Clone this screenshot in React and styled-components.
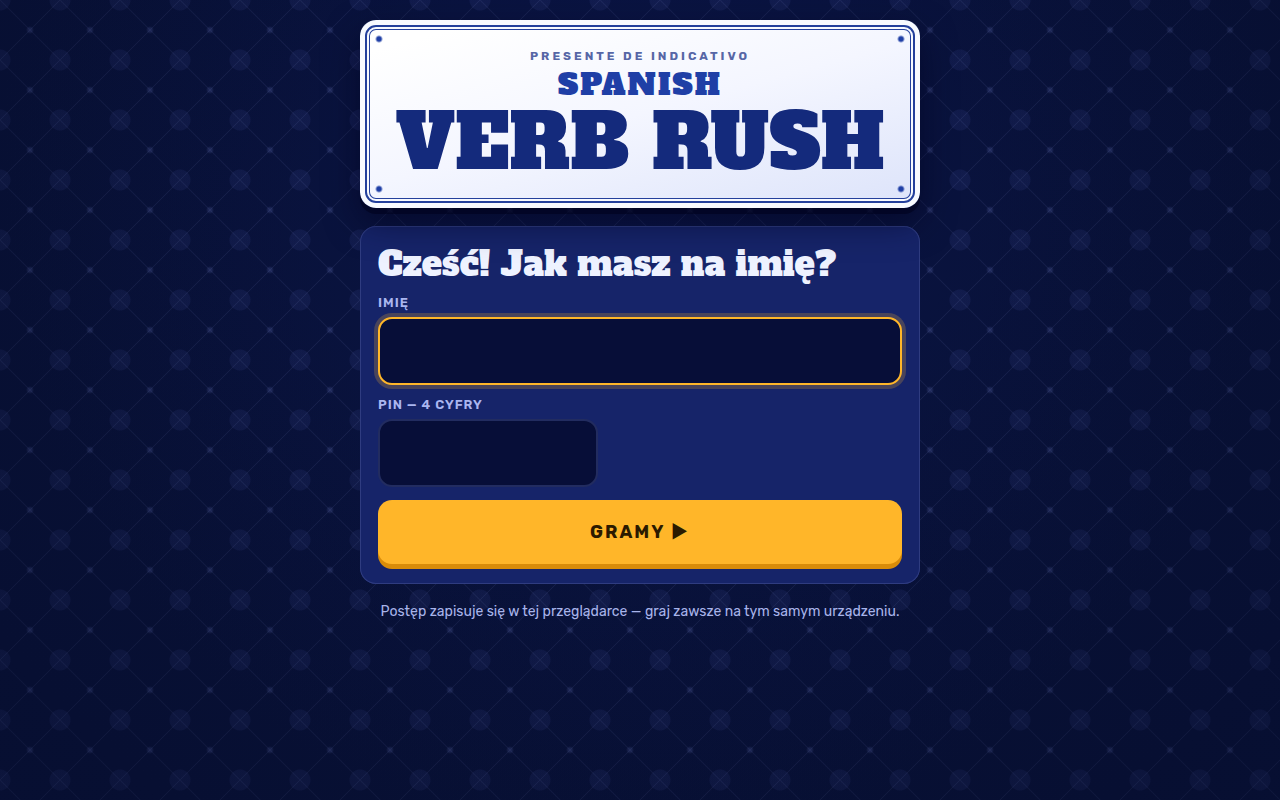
import React, { useState } from 'react';
import styled, { createGlobalStyle } from 'styled-components';

const slab = `'Alfa Slab One', 'DejaVu Serif Condensed', 'DejaVu Serif', serif`;
const sans = `Rubik, Inter, 'Noto Sans', sans-serif`;

const GlobalStyle = createGlobalStyle`
*, *::before, *::after {
  box-sizing: border-box;
}
body {
  margin: 0;
  min-height: 100vh;
  color: #eef2ff;
  font-family: ${sans};
  background-color: #070e33;
  /* vignette, azulejo tiles, then the glow behind them */
  background-image:
    radial-gradient(ellipse 800px 720px at 50% 30%, transparent 40%, rgba(5, 11, 42, 0.35)),
    radial-gradient(circle, rgba(150, 165, 255, 0.14) 2px, transparent 4px),
    linear-gradient(45deg, transparent 49%, rgba(150, 160, 230, 0.09) 50%, transparent 51%),
    linear-gradient(-45deg, transparent 49%, rgba(150, 160, 230, 0.09) 50%, transparent 51%),
    radial-gradient(circle, rgba(95, 110, 210, 0.1) 10px, transparent 11px),
    radial-gradient(ellipse 640px 700px at 50% 20%, #0a1444, #081136);
  background-size: 100% 100%, 60px 60px, 60px 60px, 60px 60px, 60px 60px, 100% 100%;
  background-position: 0 0, 0 0, 0 0, 0 0, -30px -30px, 0 0;
  background-repeat: no-repeat, repeat, repeat, repeat, repeat, no-repeat;
}
`;

const Page = styled.main`
  display: flex;
  flex-direction: column;
  gap: 18px;
  width: 100%;
  max-width: 600px;
  margin: 0 auto;
  padding: 20px;
`;

const screw = (x, y) =>
  `radial-gradient(circle at ${x} ${y}, #1f3fa6 2px, transparent 4px)`;

const Plate = styled.header`
  position: relative;
  z-index: 1;
  display: flex;
  flex-direction: column;
  align-items: center;
  padding: 28px 20px 30px;
  border-radius: 16px;
  text-align: center;
  white-space: nowrap;
  background:
    ${screw('19px', '19px')},
    ${screw('calc(100% - 19px)', '19px')},
    ${screw('19px', 'calc(100% - 19px)')},
    ${screw('calc(100% - 19px)', 'calc(100% - 19px)')},
    linear-gradient(165deg, #ffffff 10%, #f4f6ff 50%, #dce3fa);
  box-shadow:
    inset 0 0 0 5px #f8faff,
    inset 0 0 0 7px #24409c,
    inset 0 0 0 9px #f8faff,
    inset 0 0 0 10px #24409c,
    0 6px 0 rgba(0, 2, 30, 0.6),
    0 14px 34px rgba(0, 2, 30, 0.55);
`;

const Tense = styled.p`
  margin: 0;
  color: #5666a6;
  font-size: 12px;
  font-weight: 700;
  line-height: 16px;
  letter-spacing: 3px;
  text-transform: uppercase;
`;

const Title = styled.h1`
  margin: 0;
  font-family: ${slab};
  font-weight: 400;
  text-transform: uppercase;
`;

const TitleTop = styled.span`
  display: block;
  color: #1f3fa6;
  font-size: 30px;
  line-height: 42px;
  letter-spacing: 2px;
`;

const TitleMain = styled.span`
  display: block;
  color: #142a7c;
  font-size: 76px;
  line-height: 72px;
`;

const Panel = styled.form`
  display: flex;
  flex-direction: column;
  padding: 18px 18px 20px;
  border-radius: 16px;
  background: #162469;
  box-shadow: inset 0 0 0 1px #2f3c80;
`;

const Question = styled.h2`
  margin: 0 0 10px;
  color: #eef2ff;
  font-family: ${slab};
  font-size: 34px;
  font-weight: 400;
  line-height: 40px;
`;

const Label = styled.label`
  margin-bottom: 6px;
  color: #aab6f0;
  font-size: 13px;
  font-weight: 600;
  line-height: 17px;
  letter-spacing: 1px;
  text-transform: uppercase;
`;

const Input = styled.input`
  width: 100%;
  max-width: ${({ $short }) => ($short ? '220px' : 'none')};
  height: 68px;
  margin-bottom: ${({ $short }) => ($short ? '13px' : '11px')};
  padding: 0 18px;
  border: 2px solid #222c60;
  border-radius: 14px;
  outline: none;
  background: #070e38;
  color: #eef2ff;
  font-family: ${sans};
  font-size: 24px;
  font-weight: 700;
  &:focus {
    border-color: #ffb629;
    box-shadow: 0 0 0 4px rgba(255, 182, 41, 0.22);
  }
`;

const PlayButton = styled.button`
  height: 64px;
  border: 0;
  border-radius: 14px;
  background: #ffb629;
  box-shadow: 0 5px 0 #d98c09;
  color: #2b1a00;
  font-family: ${sans};
  font-size: 18px;
  font-weight: 700;
  letter-spacing: 2px;
  text-transform: uppercase;
  cursor: pointer;
`;

const Note = styled.p`
  margin: 0;
  color: #a8b4ea;
  font-size: 14px;
  line-height: 20px;
  text-align: center;
`;

export default function App() {
  const [name, setName] = useState('');
  const [pin, setPin] = useState('');

  return (
    <>
      <GlobalStyle />
      <Page>
        <Plate>
          <Tense>Presente de indicativo</Tense>
          <Title>
            <TitleTop>Spanish</TitleTop>
            <TitleMain>Verb Rush</TitleMain>
          </Title>
        </Plate>
        <Panel onSubmit={(e) => e.preventDefault()}>
          <Question>Cześć! Jak masz na imię?</Question>
          <Label htmlFor="name">Imię</Label>
          <Input
            id="name"
            autoFocus
            autoComplete="off"
            value={name}
            onChange={(e) => setName(e.target.value)}
          />
          <Label htmlFor="pin">PIN — 4 cyfry</Label>
          <Input
            id="pin"
            $short
            inputMode="numeric"
            maxLength={4}
            autoComplete="off"
            value={pin}
            onChange={(e) => setPin(e.target.value.replace(/\D/g, ''))}
          />
          <PlayButton type="submit">Gramy ▶</PlayButton>
        </Panel>
        <Note>Postęp zapisuje się w tej przeglądarce — graj zawsze na tym samym urządzeniu.</Note>
      </Page>
    </>
  );
}
